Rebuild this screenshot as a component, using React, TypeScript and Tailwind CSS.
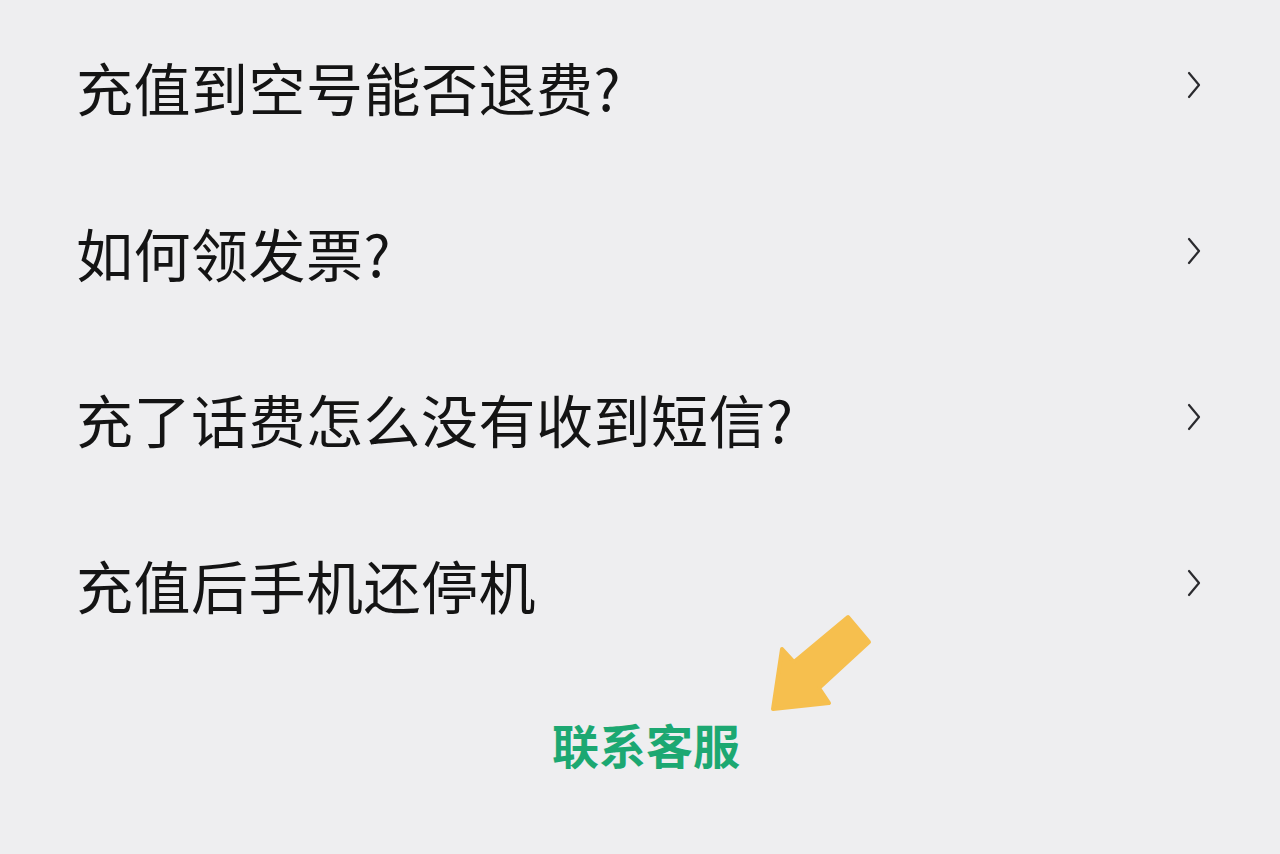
import React from "react";

const items = [
  "充值到空号能否退费?",
  "如何领发票?",
  "充了话费怎么没有收到短信?",
  "充值后手机还停机",
];

function Chevron() {
  return (
    <svg width="16" height="30" viewBox="0 0 16 30" className="shrink-0 -translate-y-[1px]">
      <path d="M3 3 L13 15 L3 27" fill="none" stroke="#2a2a2e" strokeWidth="2.2" strokeLinecap="round" strokeLinejoin="round" />
    </svg>
  );
}

export default function App() {
  return (
    <div
      className="relative w-[1280px] h-[854px] overflow-hidden bg-[#eeeef0]"
      style={{ fontFamily: '"Noto Sans CJK SC", "Noto Sans", sans-serif' }}
    >
      <div className="pt-[3px]">
        {items.map((t) => (
          <div key={t} className="h-[166px] flex items-center justify-between pl-[76px] pr-[78px]">
            <span className="text-[57px] leading-none text-[#141414] tracking-[0.5px]">{t}</span>
            <Chevron />
          </div>
        ))}
      </div>
      <div className="flex justify-center pl-[12px] mt-[53px]">
        <span className="text-[47px] leading-none font-bold text-[#1ca872]">联系客服</span>
      </div>
      <svg className="absolute left-0 top-0" width="1280" height="854" viewBox="0 0 1280 854">
        <polygon
          points="848,617 869,642 819,688 829,703 773,709 782,649 794,662"
          fill="#f6bf4e"
          stroke="#f6bf4e"
          strokeWidth="4"
          strokeLinejoin="round"
        />
      </svg>
    </div>
  );
}
